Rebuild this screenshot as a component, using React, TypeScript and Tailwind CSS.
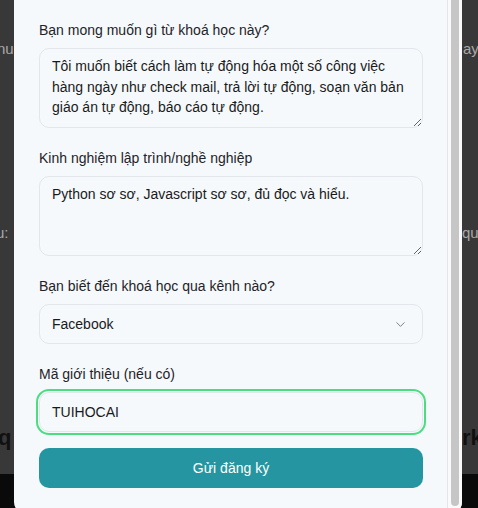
import { ChevronDown } from 'lucide-react';

const font = { fontFamily: '"Liberation Sans", Arial, sans-serif' };

function Field({ label, children }: { label: string; children: React.ReactNode }) {
  return (
    <div className="flex flex-col">
      <label className="mb-2 text-sm leading-5 text-[#1f2328]">{label}</label>
      {children}
    </div>
  );
}

export default function App() {
  return (
    <div
      className="relative h-[508px] w-[478px] overflow-hidden bg-[#383838]"
      style={font}
    >
      {/* page behind the overlay */}
      <div className="absolute inset-x-0 bottom-0 h-[34px] bg-[#0a0a0a]" />
      <span className="absolute left-[-3px] top-[38px] text-[15px] text-[#a8a8a8]">nu</span>
      <span className="absolute left-[463px] top-[38px] text-[15px] text-[#a8a8a8]">ay</span>
      <span className="absolute left-[-4px] top-[222px] text-[15px] text-[#a8a8a8]">u:</span>
      <span className="absolute left-[462px] top-[222px] text-[15px] text-[#a8a8a8]">qu</span>
      <span className="absolute left-[-2px] top-[421px] text-[22px] font-bold text-[#111]">q</span>
      <span className="absolute left-[462px] top-[421px] text-[22px] font-bold text-[#111]">rk</span>

      {/* modal, scrolled down */}
      <div className="absolute left-[14px] top-0 flex h-[514px] w-[448px] overflow-hidden rounded-b-xl bg-[#f5f9fc]">
        <form className="flex flex-1 flex-col gap-5 pl-[25px] pr-[24px] pt-5">
          <Field label="Bạn mong muốn gì từ khoá học này?">
            <textarea
              className="h-20 rounded-[10px] border border-[#e3e6ea] bg-[#f5f9fc] px-3 py-[7px] text-sm leading-[20.5px] text-[#1a1a1a] outline-none"
              defaultValue="Tôi muốn biết cách làm tự động hóa một số công việc hàng ngày như check mail, trả lời tự động, soạn văn bản giáo án tự động, báo cáo tự động."
            />
          </Field>
          <Field label="Kinh nghiệm lập trình/nghề nghiệp">
            <textarea
              className="h-20 rounded-[10px] border border-[#e3e6ea] bg-[#f5f9fc] px-3 py-[7px] text-sm leading-[20.5px] text-[#1a1a1a] outline-none"
              defaultValue="Python sơ sơ, Javascript sơ sơ, đủ đọc và hiểu."
            />
          </Field>
          <Field label="Bạn biết đến khoá học qua kênh nào?">
            <div className="flex h-10 items-center justify-between rounded-[10px] border border-[#e3e6ea] px-3 text-sm text-[#1a1a1a]">
              <span>Facebook</span>
              <ChevronDown size={15} strokeWidth={1.5} className="mr-[2px] text-[#777]" />
            </div>
          </Field>
          <div className="flex flex-col">
            <Field label="Mã giới thiệu (nếu có)">
              <input
                className="h-10 rounded-[10px] border border-[#e3e6ea] bg-[#f5f9fc] px-3 text-sm text-[#1a1a1a] outline-2 outline-offset-1 outline-[#4ade80]"
                defaultValue="TUIHOCAI"
              />
            </Field>
            <button
              type="button"
              className="mt-4 h-10 rounded-[10px] bg-[#2596a1] text-sm text-white"
            >
              Gửi đăng ký
            </button>
          </div>
        </form>
        {/* scrollbar */}
        <div className="flex w-[15px] justify-center border-l border-[#e4e6e8] bg-[#fafafa] pt-0">
          <div className="mt-[-4px] mb-[8px] w-2 rounded-full bg-[#c6c6c6]" />
        </div>
      </div>
    </div>
  );
}
